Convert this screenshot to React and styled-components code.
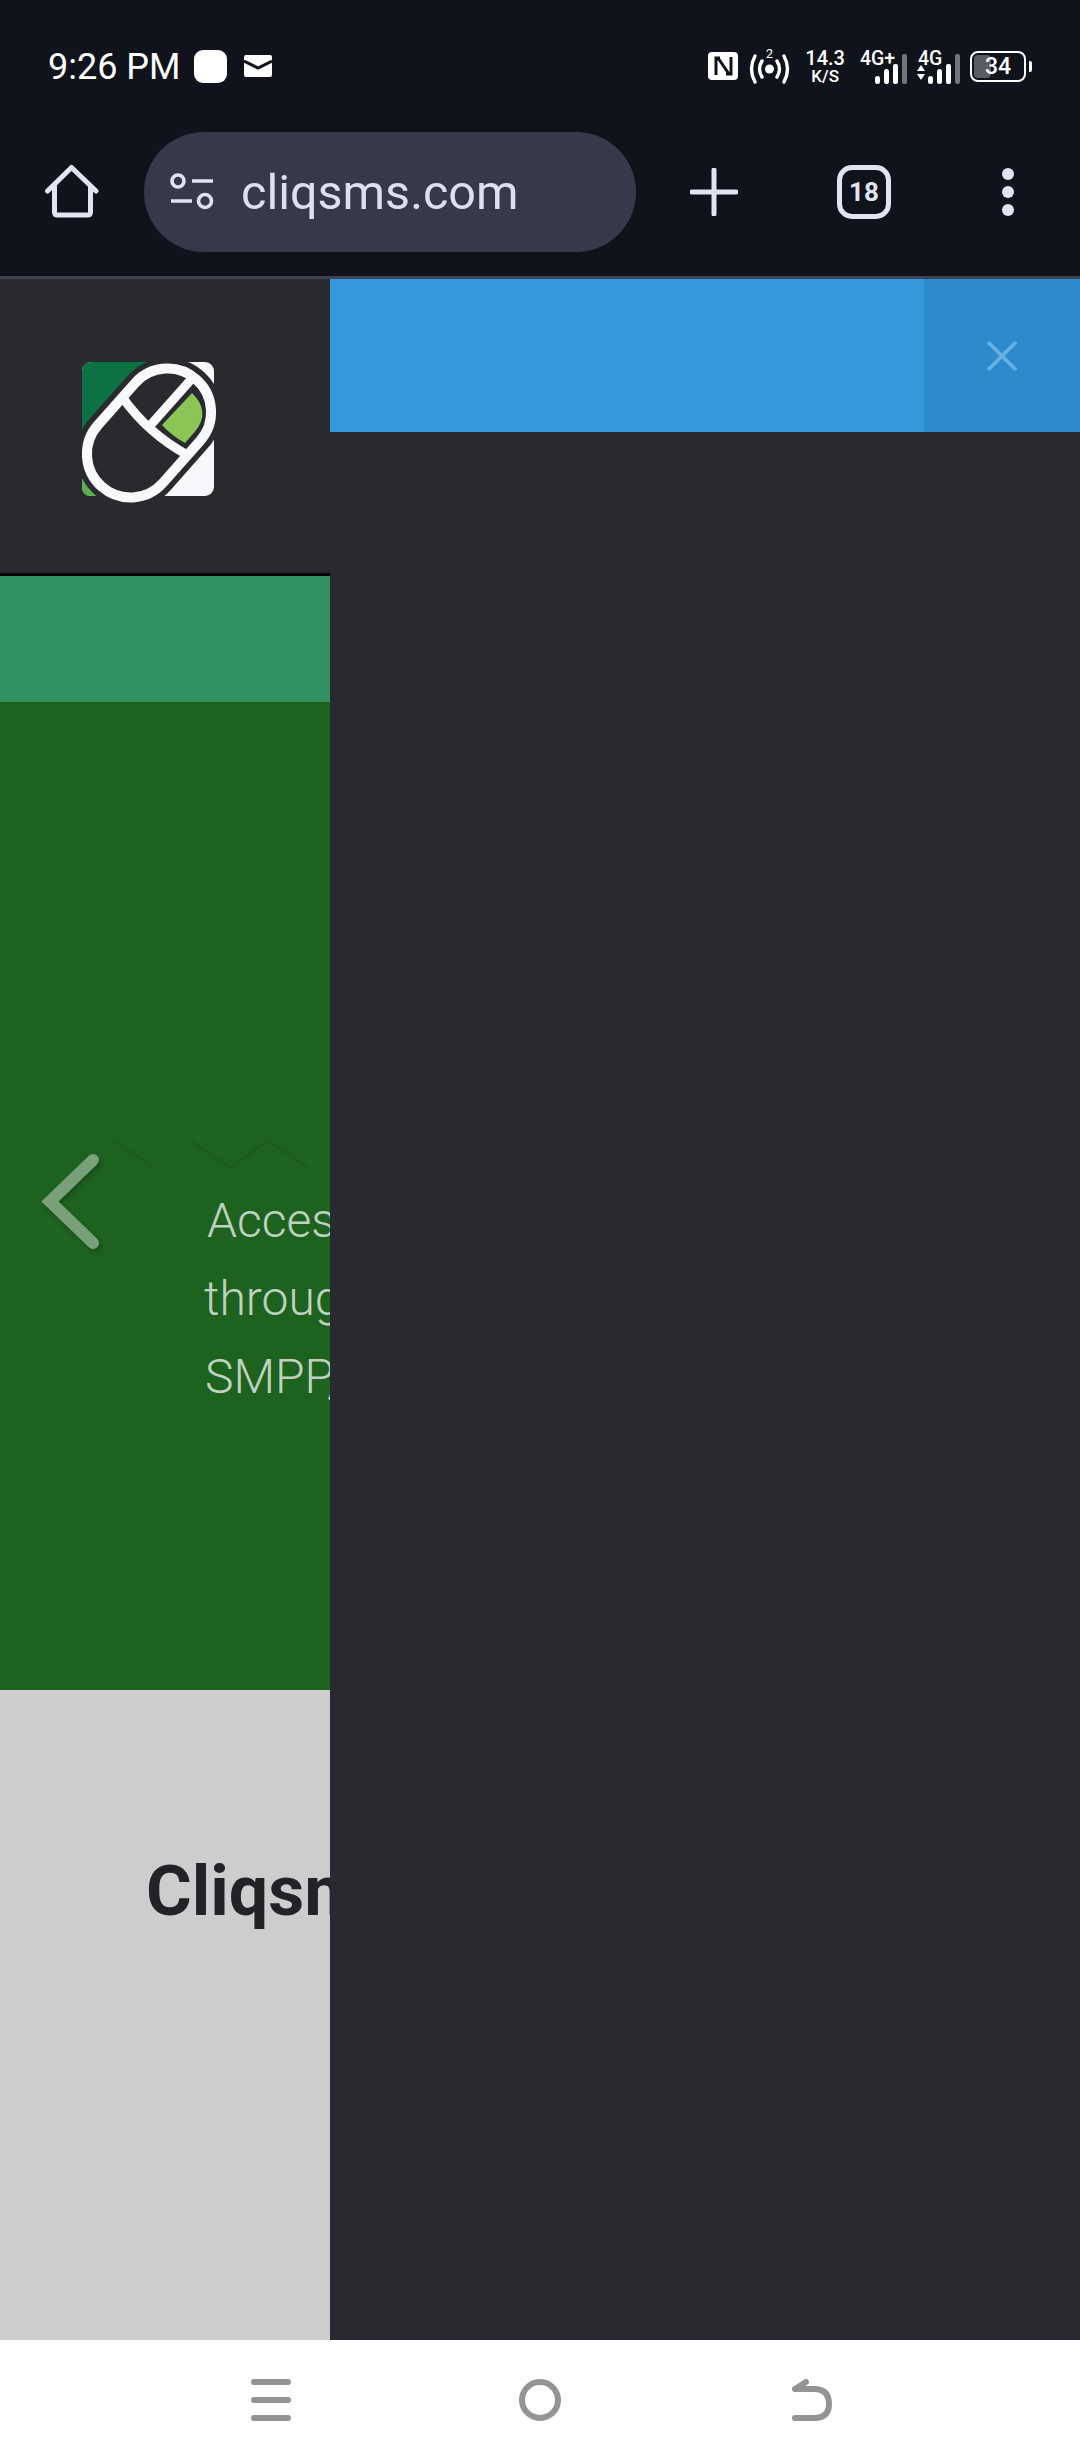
import React from "react";
import styled, { createGlobalStyle } from "styled-components";

const GlobalStyle = createGlobalStyle`
  html, body {
    margin: 0;
    padding: 0;
    background: #fff;
    font-family: Roboto, "Liberation Sans", sans-serif;
  }
`;

const Page = styled.div`
  width: 1080px;
  height: 2460px;
  display: flex;
  flex-direction: column;
  overflow: hidden;
`;

const Chrome = styled.div`
  height: 276px;
  flex: none;
  background: #10131c;
  border-bottom: 3px solid #3f4352;
  display: flex;
  flex-direction: column;
`;

const StatusBar = styled.div`
  height: 132px;
  box-sizing: border-box;
  padding: 46px 48px 0 48px;
  display: flex;
  align-items: flex-start;
  justify-content: space-between;
  color: #fff;
`;

const StatusLeft = styled.div`
  display: flex;
  align-items: center;
  height: 40px;
`;

const Time = styled.span`
  font-size: 36px;
  line-height: 40px;
  margin-top: 2px;
  margin-right: 13px;
`;

const AppDot = styled.span`
  width: 33px;
  height: 33px;
  background: #fff;
  border-radius: 9px;
  margin-right: 17px;
`;

const StatusRight = styled.div`
  display: flex;
  align-items: center;
  height: 40px;
`;

const Speed = styled.div`
  display: flex;
  flex-direction: column;
  align-items: center;
  font-weight: 500;
  color: #fff;
  margin: 0 15px 0 15px;
  span:first-child {
    font-size: 20px;
    line-height: 20px;
  }
  span:last-child {
    font-size: 17px;
    line-height: 16px;
  }
`;

const Signal = styled.div`
  position: relative;
  width: ${(p) => p.$w}px;
  height: 34px;
  margin-top: 4px;
  margin-right: 10px;
`;

const SignalLabel = styled.span`
  position: absolute;
  top: -3px;
  left: ${(p) => p.$left}px;
  font-size: 19.5px;
  line-height: 22px;
  font-weight: 500;
  white-space: nowrap;
`;

const SignalIcon = styled.svg`
  position: absolute;
  left: 0;
  top: 0;
`;

const Battery = styled.div`
  position: relative;
  width: 56px;
  height: 31px;
  box-sizing: border-box;
  border: 2px solid #fff;
  border-radius: 8px;
  display: flex;
  align-items: center;
  justify-content: center;
  margin-right: 3px;
  font-size: 23px;
  font-weight: 500;
`;

const BatteryFill = styled.span`
  position: absolute;
  left: 2px;
  top: 2px;
  bottom: 2px;
  width: 17px;
  background: #5b5d66;
  border-radius: 4px;
`;

const BatteryValue = styled.span`
  position: relative;
`;

const BatteryCap = styled.span`
  width: 3px;
  height: 11px;
  background: #fff;
  border-radius: 0 2px 2px 0;
`;

const Toolbar = styled.div`
  height: 144px;
  display: flex;
  align-items: flex-start;
  color: #e1e4f1;
`;

const HomeSlot = styled.div`
  width: 144px;
  height: 120px;
  flex: none;
  display: flex;
  align-items: center;
  padding-left: 44px;
  box-sizing: border-box;
`;

const UrlPill = styled.div`
  width: 492px;
  height: 120px;
  flex: none;
  box-sizing: border-box;
  padding-left: 26px;
  background: #353949;
  border-radius: 60px;
  display: flex;
  align-items: center;
`;

const UrlText = styled.span`
  font-size: 48.5px;
  line-height: 60px;
  margin: 2px 0 0 27px;
  color: #dde0ef;
`;

const Actions = styled.div`
  flex: 1;
  height: 120px;
  display: flex;
  align-items: center;
`;

const PlusSlot = styled.div`
  margin-left: 54px;
  width: 48px;
  height: 48px;
`;

const TabCount = styled.div`
  margin-left: 99px;
  width: 54px;
  height: 54px;
  box-sizing: border-box;
  border: 5px solid #e1e4f1;
  border-radius: 15px;
  display: flex;
  align-items: center;
  justify-content: center;
  font-size: 26px;
  font-weight: 700;
`;

const Dots = styled.div`
  margin-left: 111px;
  display: flex;
  flex-direction: column;
  gap: 6px;
  span {
    width: 12px;
    height: 12px;
    border-radius: 50%;
    background: #e1e4f1;
  }
`;

const Main = styled.div`
  flex: 1;
  display: flex;
  min-height: 0;
`;

const Site = styled.div`
  width: 330px;
  flex: none;
  overflow: hidden;
  display: flex;
  flex-direction: column;
`;

const SiteHeader = styled.div`
  height: 297px;
  flex: none;
  background: #292a2f;
  border-bottom: 3px solid #000;
  box-sizing: border-box;
  padding: 12px 0 0 82px;
  display: flex;
  align-items: center;
`;

const LogoMark = styled.svg`
  overflow: visible;
`;

const TopStrip = styled.div`
  height: 126px;
  flex: none;
  background: #2f925f;
`;

const Hero = styled.div`
  position: relative;
  height: 988px;
  flex: none;
  background: #1e621f;
  box-sizing: border-box;
  padding-top: 480px;
`;

const HeroLine = styled.div`
  width: 800px;
  margin-left: ${(p) => p.$left}px;
  font-size: 48px;
  line-height: 78px;
  font-weight: 300;
  color: rgba(255, 255, 255, 0.72);
  white-space: nowrap;
`;

const ZigZag = styled.svg`
  position: absolute;
  left: 100px;
  top: 425px;
`;

const PrevArrow = styled.svg`
  position: absolute;
  left: 39px;
  top: 446px;
  filter: drop-shadow(2px 3px 2px rgba(0, 0, 0, 0.2));
`;

const IntroBlock = styled.div`
  flex: 1;
  background: #cdcdcd;
  box-sizing: border-box;
  padding: 163px 0 0 146px;
`;

const IntroTitle = styled.h2`
  margin: 0;
  width: 800px;
  font-size: 70px;
  line-height: 76px;
  font-weight: 700;
  color: #222326;
  white-space: nowrap;
`;

const Panel = styled.div`
  flex: 1;
  background: #292a2f;
`;

const Notice = styled.div`
  height: 153px;
  background: #3498db;
  display: flex;
  justify-content: flex-end;
`;

const CloseBtn = styled.div`
  width: 156px;
  background: #2e8bcb;
  display: flex;
  align-items: center;
  justify-content: center;
`;

const NavBar = styled.div`
  height: 120px;
  flex: none;
  background: #fff;
  display: flex;
  align-items: center;
`;

const NavSlot = styled.div`
  margin-left: ${(p) => p.$ml}px;
  display: flex;
`;

function Logo() {
  return (
    <LogoMark width="134" height="140" viewBox="0 0 134 140">
      <rect x="0" y="0" width="132" height="134" rx="9" fill="#f7f8fd" />
      <path d="M0 9 Q0 0 9 0 H90 L0 100Z" fill="#0d7243" />
      <path d="M0 95 V125 Q0 134 9 134 H40Z" fill="#5cb04f" />
      <g transform="rotate(41.5 67 71)">
        <rect x="23.5" y="-0.5" width="87" height="143" rx="43.5" fill="none" stroke="#292a2f" strokeWidth="21" />
        <rect x="23.5" y="-0.5" width="87" height="143" rx="43.5" fill="#292a2f" stroke="#f8f9fe" strokeWidth="10" />
        <path d="M23.5 62 Q67 72 110.5 62" fill="none" stroke="#f8f9fe" strokeWidth="9" />
        <path d="M63 0 V66" fill="none" stroke="#f8f9fe" strokeWidth="9" />
        <path d="M72.7 12.5 Q100 14 100.5 40 L100.6 54.6 Q86 58 71.4 56.4Z" fill="#8bc556" />
      </g>
    </LogoMark>
  );
}

function SignalBars({ arrows }) {
  const x = arrows ? 11 : 15;
  return (
    <SignalIcon width={x + 32} height="34" viewBox={`0 0 ${x + 32} 34`}>
      {arrows && <path d="M0 20 L4 14 L8 20Z M0 23 L8 23 L4 29Z" fill="#fff" />}
      <rect x={x} y="25" width="5" height="8" rx="2.5" fill="#fff" />
      <rect x={x + 9} y="18" width="5" height="15" rx="2.5" fill="#fff" />
      <rect x={x + 18} y="13" width="5" height="20" rx="2" fill="#fff" />
      <rect x={x + 27} y="3" width="5" height="30" rx="2" fill="#74767d" />
    </SignalIcon>
  );
}

export default function App() {
  return (
    <Page>
      <GlobalStyle />
      <Chrome>
        <StatusBar>
          <StatusLeft>
            <Time>9:26 PM</Time>
            <AppDot />
            <svg width="28" height="22" viewBox="0 0 28 22">
              <rect width="28" height="22" rx="2" fill="#fff" />
              <path d="M0 6 L14 13 L28 6" fill="none" stroke="#10131c" strokeWidth="3" />
            </svg>
          </StatusLeft>
          <StatusRight>
            <svg width="30" height="28" viewBox="0 0 30 28" style={{ marginRight: 11 }}>
              <rect width="30" height="28" rx="4" fill="#fff" />
              <path
                d="M8 23 V6 L10 6 L21 22 L23 22 V5 M8 6 H12 M18 22 H23"
                fill="none"
                stroke="#10131c"
                strokeWidth="3"
              />
            </svg>
            <svg width="41" height="38" viewBox="0 0 41 38">
              <circle cx="20.5" cy="22" r="4.5" fill="#fff" />
              <path
                d="M13 14 Q8 22 13 30 M28 14 Q33 22 28 30 M6 9 Q-1 22 6 35 M35 9 Q42 22 35 35"
                fill="none"
                stroke="#fff"
                strokeWidth="3.4"
                strokeLinecap="round"
              />
              <text x="20.5" y="11" fontSize="13" fill="#fff" textAnchor="middle" fontFamily="Roboto">
                2
              </text>
            </svg>
            <Speed>
              <span>14.3</span>
              <span>K/S</span>
            </Speed>
            <Signal $w={47}>
              <SignalLabel $left={0}>4G+</SignalLabel>
              <SignalBars />
            </Signal>
            <Signal $w={43}>
              <SignalLabel $left={1}>4G</SignalLabel>
              <SignalBars arrows />
            </Signal>
            <Battery>
              <BatteryFill />
              <BatteryValue>34</BatteryValue>
            </Battery>
            <BatteryCap />
          </StatusRight>
        </StatusBar>
        <Toolbar>
          <HomeSlot>
            <svg width="56" height="56" viewBox="0 0 56 56">
              <path
                d="M3.5 27 L27.5 3.5 L52 27 M10.5 22 V48 Q10.5 51 13.5 51 H43.5 Q46.5 51 46.5 48 V22"
                fill="none"
                stroke="#e1e4f1"
                strokeWidth="5"
                strokeLinecap="round"
                strokeLinejoin="round"
              />
            </svg>
          </HomeSlot>
          <UrlPill>
            <svg width="44" height="38" viewBox="0 0 44 38">
              <circle cx="8" cy="8" r="6" fill="none" stroke="#e1e4f1" strokeWidth="3.6" />
              <circle cx="35" cy="28" r="6.5" fill="none" stroke="#e1e4f1" strokeWidth="3.6" />
              <path d="M22 8 H43 M1 28 H22" stroke="#e1e4f1" strokeWidth="3.6" />
            </svg>
            <UrlText>cliqsms.com</UrlText>
          </UrlPill>
          <Actions>
            <PlusSlot>
              <svg width="48" height="48" viewBox="0 0 48 48">
                <path
                  d="M24 2 V46 M2 24 H46"
                  stroke="#e1e4f1"
                  strokeWidth="5"
                  strokeLinecap="round"
                />
              </svg>
            </PlusSlot>
            <TabCount>18</TabCount>
            <Dots>
              <span />
              <span />
              <span />
            </Dots>
          </Actions>
        </Toolbar>
      </Chrome>
      <Main>
        <Site>
          <SiteHeader>
            <Logo />
          </SiteHeader>
          <TopStrip />
          <Hero>
            <ZigZag width="230" height="60" viewBox="0 0 230 60">
              <path
                d="M13 13 L55 41 M90 13 L130 41 L168 13 L208 41"
                fill="none"
                stroke="#1c5d1d"
                strokeWidth="3"
              />
            </ZigZag>
            <PrevArrow width="64" height="108" viewBox="0 0 64 108">
              <path
                d="M54 12 L11 53.5 L54 95"
                fill="none"
                stroke="#78a179"
                strokeWidth="12"
                strokeLinecap="round"
              />
            </PrevArrow>
            <HeroLine $left={207}>Access</HeroLine>
            <HeroLine $left={204}>through</HeroLine>
            <HeroLine $left={205}>SMPP,</HeroLine>
          </Hero>
          <IntroBlock>
            <IntroTitle>Cliqsms</IntroTitle>
          </IntroBlock>
        </Site>
        <Panel>
          <Notice>
            <CloseBtn>
              <svg width="32" height="32" viewBox="0 0 32 32">
                <path d="M2 2 L30 30 M30 2 L2 30" stroke="#64b1e6" strokeWidth="3.6" />
              </svg>
            </CloseBtn>
          </Notice>
        </Panel>
      </Main>
      <NavBar>
        <NavSlot $ml={251}>
          <svg width="40" height="42" viewBox="0 0 40 42">
            <path
              d="M3 3 H37 M3 21 H37 M3 39 H37"
              stroke="#949494"
              strokeWidth="6"
              strokeLinecap="round"
            />
          </svg>
        </NavSlot>
        <NavSlot $ml={228}>
          <svg width="42" height="42" viewBox="0 0 42 42">
            <circle cx="21" cy="21" r="18" fill="none" stroke="#949494" strokeWidth="6" />
          </svg>
        </NavSlot>
        <NavSlot $ml={231}>
          <svg width="40" height="42" viewBox="0 0 40 42">
            <path
              d="M3 10 H22 Q37 10 37 25 Q37 39 22 39 H3 M3 10 L14 3"
              fill="none"
              stroke="#949494"
              strokeWidth="6"
              strokeLinecap="round"
            />
          </svg>
        </NavSlot>
      </NavBar>
    </Page>
  );
}
